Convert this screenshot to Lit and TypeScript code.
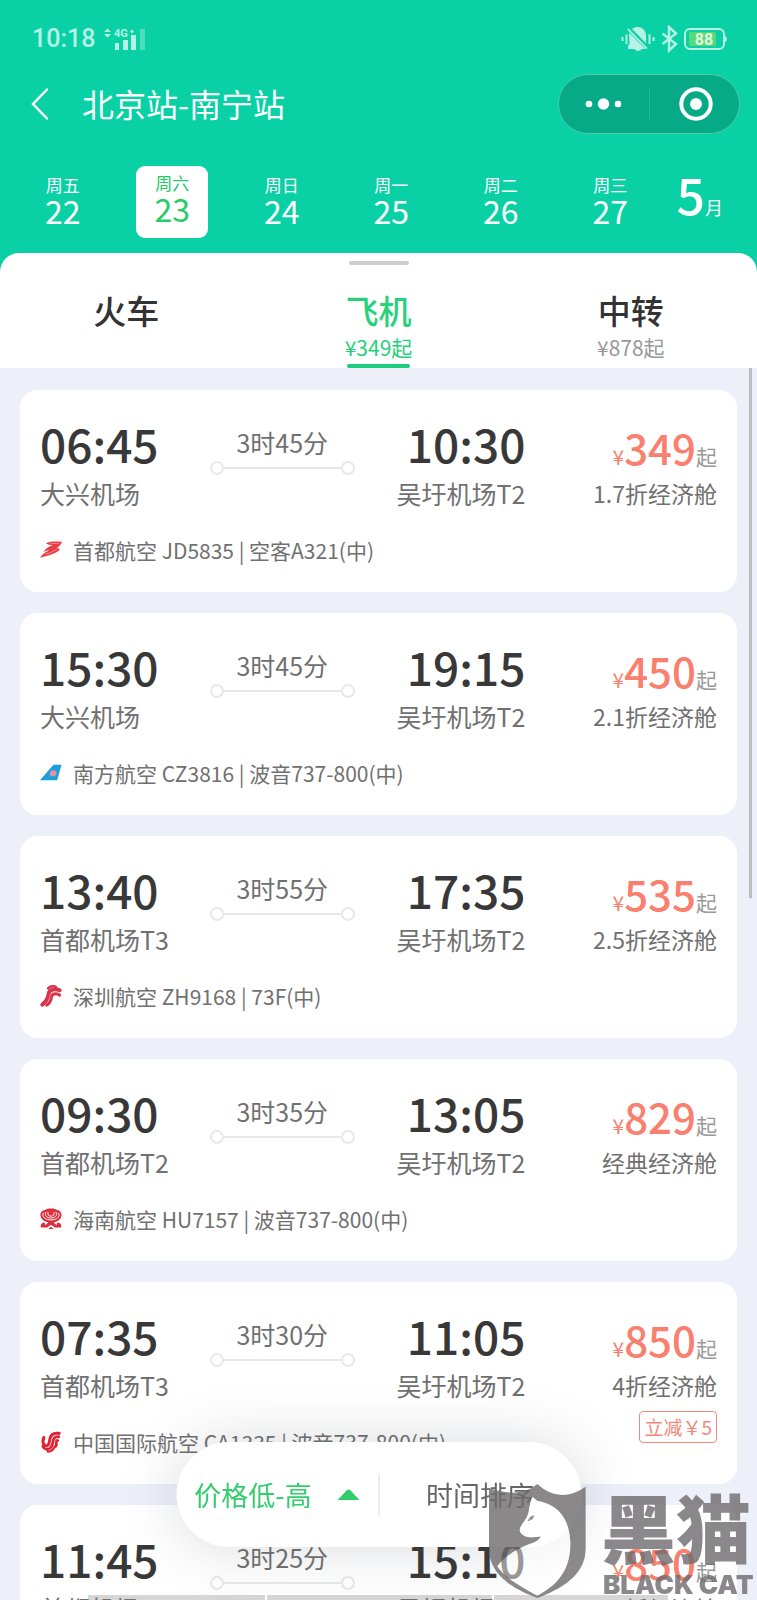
import { LitElement, html, svg, css, nothing } from "lit";
import { customElement, property, state } from "lit/decorators.js";
import { classMap } from "lit/directives/class-map.js";

interface Flight {
  dep: string;
  from: string;
  arr: string;
  to: string;
  duration: string;
  price: number;
  cabin: string;
  airline: string;
  logo: string;
  discount?: string;
}

const FLIGHTS: Flight[] = [
  { dep: "06:45", from: "大兴机场", arr: "10:30", to: "吴圩机场T2", duration: "3时45分", price: 349, cabin: "1.7折经济舱", airline: "首都航空 JD5835 | 空客A321(中)", logo: "jd" },
  { dep: "15:30", from: "大兴机场", arr: "19:15", to: "吴圩机场T2", duration: "3时45分", price: 450, cabin: "2.1折经济舱", airline: "南方航空 CZ3816 | 波音737-800(中)", logo: "cz" },
  { dep: "13:40", from: "首都机场T3", arr: "17:35", to: "吴圩机场T2", duration: "3时55分", price: 535, cabin: "2.5折经济舱", airline: "深圳航空 ZH9168 | 73F(中)", logo: "zh" },
  { dep: "09:30", from: "首都机场T2", arr: "13:05", to: "吴圩机场T2", duration: "3时35分", price: 829, cabin: "经典经济舱", airline: "海南航空 HU7157 | 波音737-800(中)", logo: "hu" },
  { dep: "07:35", from: "首都机场T3", arr: "11:05", to: "吴圩机场T2", duration: "3时30分", price: 850, cabin: "4折经济舱", airline: "中国国际航空 CA1335 | 波音737-800(中)", logo: "ca", discount: "立减￥5" },
  { dep: "11:45", from: "首都机场T3", arr: "15:10", to: "吴圩机场T2", duration: "3时25分", price: 850, cabin: "4折经济舱", airline: "中国国际航空 CA1465 | 波音737-800(中)", logo: "ca" },
];

const LOGOS: Record<string, unknown> = {
  jd: svg`
    <path fill="#ea3d46" d="M6 4C11 1.500 16 2 23 2.500C22 5.500 20 7.500 17.500 9C19.500 9 20.500 10 20.500 11C15 15.500 8 17 0 19C2.500 15.500 6 13 9.500 11.500C7.500 11.300 5.500 12 3.500 13C6 9 10 7 13 6C10.500 5.500 8.500 5.700 6 4Z"/>
    <path stroke="#f7a3a5" stroke-width="0.800" fill="none" d="M6 15.500C11 14 14.500 12 17.500 10.300M11 4.500C14 4 17 4 20 4"/>`,
  cz: svg`
    <path fill="#1e9fdc" d="M0 18.500L14 2.500H22.500L18 18.500Z"/>
    <path fill="#e9919b" d="M10.500 12.500C9.500 9.500 13 7.500 15.500 8.500C18.500 9.500 17.500 14 14.500 14.500C12.500 14.800 11 14 10.500 12.500Z"/>`,
  zh: svg`
    <g fill="none" stroke="#d8334d" stroke-linecap="round">
      <path stroke-width="2.600" d="M8.500 3C11 0 17 .3 17 3"/>
      <path stroke-width="4.200" d="M20.500 5C16 3 9.500 4 9 9C8.500 13 6.500 17 2.500 20"/>
      <path stroke-width="3.200" d="M20.500 10C16 7.500 12.500 9 12 12C11.500 15.500 10 18.500 7 20.500"/>
    </g>
    <path fill="none" stroke="#f3a5b0" stroke-width="0.600" d="M19 7.500C14 5.500 10.800 7.500 10.500 11C10 15 8 18 5 20.500"/>`,
  hu: svg`
    <path fill="#dc2f3e" d="M5 1.500C9 -.5 14 -.5 18 1.500C21 2 23 4.500 22.500 7.500C22 11.500 18 13.500 14.500 14.500C15.500 16 16.500 17 18 17.500C17 16.500 17.500 15 19 15C21.500 15 23 17.500 22 20H15.500L11.500 17L7.500 20H1C0 17.500 1.500 15 4 15C5.500 15 6 16.500 5 17.500C6.500 17 7.500 16 8.500 14.500C5 13.500 1 11.500 .5 7.500C0 4.500 2 2 5 1.500ZM8.500 21.500L11.500 19L14.500 21.500Z"/>
    <path fill="none" stroke="#fff" stroke-width="1" d="M6.500 3.500C4 7.500 7.500 10 11.500 10S19 7.500 16.500 3.500M8.500 4C7.500 6.500 9 8 11.500 8S15.500 6.500 14.500 4M3.500 4.500C1.500 9 6 12 11.500 12S21.500 9 19.500 4.500"/>`,
  ca: svg`
    <g fill="none" stroke="#e02233" stroke-linecap="round">
      <path stroke-width="3.400" d="M20 2C13 1.200 11 4 10.500 8C10 12 8.500 16.500 5.500 15C2.500 13.500 3 9 4 6.500"/>
      <path stroke-width="3" d="M19.500 5.500C15 5 14 7.500 13.500 11C13 15.500 10.500 19.500 6.500 18.500C4.500 18 3.500 17 3 15.500"/>
      <path stroke-width="3" d="M18.500 9.500C16.500 9 16.500 11 17 12.500C17.500 14.500 16.500 16 15 16C13.500 19 11.500 20.500 8.500 20.800"/>
    </g>
    <path fill="none" stroke="#fbd5d8" stroke-width="0.700" d="M19 3.800C14 3.400 12.500 5.500 12 9C11.500 13 9.500 18 5.500 16.600M18 7.300C15.500 7.500 15.500 9.500 15.200 12C14.800 15.500 12 19.500 9 19.800"/>`,
};

@customElement("flight-card")
class FlightCard extends LitElement {
  @property({ attribute: false }) flight!: Flight;

  static styles = css`
    :host { display: block; }
    .card {
      display: grid;
      grid-template-columns: 169fr 145fr 170fr 191fr;
      row-gap: 22px;
      padding: 23px 20px 27px;
      border-radius: 18px;
      background: #fff;
      color: #707070;
      white-space: nowrap;
    }
    .time { font-size: 46px; line-height: 60px; font-weight: 500; color: #383838; }
    .place { font-size: 25px; line-height: 40px; }
    .arrive { text-align: right; }
    .route {
      display: flex;
      flex-direction: column;
      gap: 4px;
      padding-top: 14px;
      text-align: center;
      font-size: 25px;
      line-height: 30px;
    }
    .track { display: flex; align-items: center; }
    .stop { box-sizing: border-box; width: 14px; height: 14px; border: 2px solid #e8e8e8; border-radius: 50%; }
    .line { flex: 1; height: 2px; background: #e8e8e8; }
    .fare {
      grid-column: 4;
      grid-row: 1 / span 2;
      display: flex;
      flex-direction: column;
      align-items: flex-end;
      padding-top: 4px;
    }
    .price { height: 60px; line-height: 60px; color: #f9806f; display: flex; align-items: baseline; }
    .yen { font-size: 21px; }
    .amount { font-size: 42px; font-weight: 500; }
    .from { font-size: 21px; color: #999; }
    .cabin { font-size: 23px; line-height: 32px; }
    .discount {
      box-sizing: border-box;
      margin-top: 10px;
      padding: 0 4px;
      border: 1px solid #f3887b;
      border-radius: 4px;
      color: #f3887b;
      font-size: 19px;
      line-height: 30px;
    }
    .airline {
      grid-column: 1 / span 3;
      display: flex;
      align-items: center;
      gap: 11px;
      font-size: 21px;
      line-height: 30px;
    }
    .logo { width: 22px; height: 22px; flex: none; }
  `;

  render() {
    const f = this.flight;
    return html`
      <article class="card">
        <div>
          <div class="time">${f.dep}</div>
          <div class="place">${f.from}</div>
        </div>
        <div class="route">
          <span>${f.duration}</span>
          <div class="track"><i class="stop"></i><i class="line"></i><i class="stop"></i></div>
        </div>
        <div class="arrive">
          <div class="time">${f.arr}</div>
          <div class="place">${f.to}</div>
        </div>
        <div class="fare">
          <div class="price"><span class="yen">¥</span><span class="amount">${f.price}</span><span class="from">起</span></div>
          <div class="cabin">${f.cabin}</div>
          ${f.discount ? html`<div class="discount">${f.discount}</div>` : nothing}
        </div>
        <div class="airline">
          <svg class="logo" viewBox="0 0 23 22" aria-hidden="true">${LOGOS[f.logo]}</svg>
          <span>${f.airline}</span>
        </div>
      </article>
    `;
  }
}

@customElement("app-root")
class AppRoot extends LitElement {
  @state() private day = 23;
  @state() private tab = "飞机";
  @state() private sort = "price";

  static styles = css`
    :host {
      position: relative;
      display: flex;
      flex-direction: column;
      height: 100vh;
      overflow: hidden;
      background: #09d1a5;
      font-family: "Noto Sans CJK SC", sans-serif;
      font-weight: 400;
    }
    button { margin: 0; padding: 0; border: 0; background: none; color: inherit; font: inherit; cursor: pointer; }
    .status {
      display: flex;
      align-items: center;
      justify-content: space-between;
      height: 28px;
      padding: 25px 30px 0 32px;
      color: #b5f1e4;
    }
    .clock, .indicators { display: flex; align-items: center; }
    .clock { gap: 9px; font: 500 25px/28px Roboto, sans-serif; }
    .indicators { gap: 6px; }
    .signal { width: 42px; height: 22px; }
    .bell { width: 34px; height: 26px; }
    .bluetooth { width: 17px; height: 28px; }
    .battery { width: 43px; height: 24px; font: 700 16px Roboto, sans-serif; }
    .nav { display: flex; align-items: center; height: 60px; padding: 21px 17px 0 20px; color: #fff; }
    .back { width: 40px; height: 40px; }
    .back svg { display: block; width: 40px; height: 40px; }
    .title { flex: 1; margin: 0; padding: 0 0 2px 22px; font-size: 32px; line-height: 40px; font-weight: inherit; }
    .capsule {
      box-sizing: border-box;
      display: flex;
      align-items: center;
      width: 182px;
      height: 60px;
      border: 1px solid #4cc9ab;
      border-radius: 30px;
      background: #07aa87;
    }
    .capsule button { flex: 1; display: flex; justify-content: center; }
    .capsule svg { width: 38px; height: 36px; }
    .split { width: 1px; height: 34px; background: #2bb598; }
    .days { display: flex; padding: 32px 0 15px 8px; color: #fff; }
    .day { flex: 1; display: flex; justify-content: center; }
    .box {
      box-sizing: border-box;
      display: flex;
      flex-direction: column;
      align-items: center;
      justify-content: flex-start;
      width: 72px;
      height: 72px;
      padding-top: 9px;
      border-radius: 9px;
    }
    .box.on { padding-top: 7px; background: #fff; color: #25cb68; }
    .week { font-size: 17px; line-height: 20px; }
    .num { font-size: 32px; line-height: 30px; }
    .month { display: flex; align-items: baseline; justify-content: flex-end; width: 58px; padding-right: 34px; line-height: 54px; }
    .mnum { font-size: 50px; font-weight: 500; }
    .munit { font-size: 18px; }
    .sheet { flex: 1; min-height: 0; display: flex; flex-direction: column; border-radius: 19px 19px 0 0; background: #fff; overflow: hidden; }
    .handle { align-self: center; width: 60px; height: 4px; margin-top: 8px; border-radius: 2px; background: #cdcdcd; }
    .tabs { display: grid; grid-template-columns: repeat(3, 1fr); padding-top: 25px; }
    .tab { display: flex; flex-direction: column; align-items: center; height: 78px; color: #999; }
    .name { font-size: 33px; line-height: 40px; font-weight: 500; color: #333; }
    .low { flex: 1; font-size: 21px; line-height: 34px; }
    .bar { width: 63px; height: 4px; border-radius: 2px; }
    .tab.on, .tab.on .name { color: #26d17a; }
    .tab.on .bar { background: #1fcc7c; }
    .list {
      flex: 1;
      min-height: 0;
      overflow-y: auto;
      scrollbar-width: none;
      display: flex;
      flex-direction: column;
      gap: 21px;
      padding: 22px 20px;
      background: #edf0f8;
    }
    .thumb { position: absolute; right: 5px; top: 368px; width: 3px; height: 530px; background: #b9bcc0; }
    .sorter {
      position: absolute;
      left: 50%;
      bottom: 53px;
      transform: translateX(-50%);
      display: flex;
      align-items: center;
      width: 405px;
      height: 105px;
      border-radius: 53px;
      background: #fff;
      box-shadow: 0 0 60px rgba(70, 75, 90, 0.2);
      color: #666;
      font-size: 27px;
      line-height: 40px;
    }
    .sorter button { flex: 1; display: flex; align-items: center; justify-content: center; gap: 26px; height: 100%; }
    .sorter .on { color: #34cd6e; }
    .arrow { width: 22px; height: 11px; }
    .rule { width: 1px; height: 42px; background: #ddd; }
    .dock { position: absolute; left: 88px; right: 89px; bottom: 0; height: 5px; display: grid; grid-template-columns: 178fr 225fr 175fr; gap: 2px; }
    .dock i { background: rgba(120, 120, 120, 0.3); }
    .mark { position: absolute; right: 0; bottom: 0; display: flex; align-items: flex-end; gap: 14px; color: #6f6b6e; opacity: 0.8; pointer-events: none; }
    .shield { width: 99px; height: 116px; }
    .brand { display: flex; flex-direction: column; width: 156px; padding-bottom: 2px; white-space: nowrap; font-weight: 900; }
    .cn { font-size: 75px; line-height: 92px; }
    .en { font: 900 26px/26px Inter, "Noto Sans CJK SC", sans-serif; padding-left: 2px; }
  `;

  private renderDay(week: string, num: number) {
    return html`
      <div class="day">
        <button class=${classMap({ box: true, on: this.day === num })} @click=${() => (this.day = num)}>
          <span class="week">${week}</span><span class="num">${num}</span>
        </button>
      </div>
    `;
  }

  private renderTab(name: string, low: string) {
    return html`
      <button role="tab" aria-selected=${this.tab === name} class=${classMap({ tab: true, on: this.tab === name })} @click=${() => (this.tab = name)}>
        <span class="name">${name}</span><span class="low">${low}</span><span class="bar"></span>
      </button>
    `;
  }

  render() {
    return html`
      <div class="status">
        <div class="clock">
          <span>10:18</span>
          <svg class="signal" viewBox="0 0 42 22" fill="currentColor">
            <path d="M0 4L3.500 0.500L7 4ZM0 6L3.500 9.500L7 6Z"/>
            <text x="10" y="9" font-size="11" font-weight="700">4G</text>
            <path d="M26 3.500L28 1.500L30 3.500L28 5.500Z"/>
            <rect x="11" y="15" width="4" height="7"/><rect x="19" y="12" width="5" height="10"/>
            <rect x="27" y="7" width="5" height="15"/><rect x="36" y="1" width="5" height="21" opacity="0.400"/>
          </svg>
        </div>
        <div class="indicators">
          <svg class="bell" viewBox="0 0 34 26" fill="none" stroke="currentColor" stroke-width="2">
            <path fill="currentColor" stroke="none" d="M11 3C17 -1.500 25 2.500 25 9.500V17.500ZM8 6.500L24.500 23H20.500C19.500 25.500 14.500 25.500 13.500 23H7V20L8.500 18Z"/>
            <path d="M7 3L26 22.500M1.500 11V15M5.500 8.500V18M28.500 8.500V18M32.500 11V15"/>
            <path stroke="#09d1a5" stroke-width="1.800" d="M9 2.500L27 21"/>
          </svg>
          <svg class="bluetooth" viewBox="0 0 17 28" fill="none" stroke="currentColor" stroke-width="2.400">
            <path d="M1.500 8.500L15 19L8 25.500V2L15 8.500L1.500 19"/>
          </svg>
          <svg class="battery" viewBox="0 0 43 24">
            <rect x="1" y="2" width="39" height="20" rx="5" fill="none" stroke="currentColor" stroke-width="2"/>
            <path fill="currentColor" d="M41 9C43.500 10 43.500 14 41 15Z"/>
            <rect x="5" y="5" width="27" height="14" rx="2" fill="#56d97d"/>
            <text x="20" y="18" text-anchor="middle" fill="#e4f9d8">88</text>
          </svg>
        </div>
      </div>
      <div class="nav">
        <button class="back" aria-label="返回">
          <svg viewBox="0 0 40 40" fill="none" stroke="#fff" stroke-width="2.500" stroke-linecap="round"><path d="M27 5.500L13 20L27 34.500"/></svg>
        </button>
        <h1 class="title">北京站-南宁站</h1>
        <div class="capsule">
          <button aria-label="更多">
            <svg viewBox="0 0 38 36" fill="#fff"><circle cx="4" cy="18" r="3.300"/><circle cx="18.500" cy="18" r="5.700"/><circle cx="33" cy="18" r="3.300"/></svg>
          </button>
          <span class="split"></span>
          <button aria-label="关闭">
            <svg viewBox="0 0 38 36" fill="none" stroke="#fff"><circle cx="21" cy="18" r="14.700" stroke-width="4"/><circle cx="21" cy="18" r="6" fill="#fff" stroke="none"/></svg>
          </button>
        </div>
      </div>
      <div class="days">
        ${this.renderDay("周五", 22)}${this.renderDay("周六", 23)}${this.renderDay("周日", 24)}
        ${this.renderDay("周一", 25)}${this.renderDay("周二", 26)}${this.renderDay("周三", 27)}
        <div class="month"><span class="mnum">5</span><span class="munit">月</span></div>
      </div>
      <main class="sheet">
        <div class="handle"></div>
        <div class="tabs" role="tablist">
          ${this.renderTab("火车", "")}${this.renderTab("飞机", "¥349起")}${this.renderTab("中转", "¥878起")}
        </div>
        <div class="list">${FLIGHTS.map((f) => html`<flight-card .flight=${f}></flight-card>`)}</div>
      </main>
      <div class="thumb"></div>
      <div class="dock"><i></i><i></i><i></i></div>
      <div class="sorter">
        <button class=${classMap({ on: this.sort === "price" })} @click=${() => (this.sort = "price")}>
          价格低-高<svg class="arrow" viewBox="0 0 22 11" fill="currentColor"><path d="M0 11L9 1.500Q11 -.5 13 1.500L22 11Z"/></svg>
        </button>
        <span class="rule"></span>
        <button class=${classMap({ on: this.sort === "time" })} @click=${() => (this.sort = "time")}>时间排序</button>
      </div>
      <div class="mark">
        <svg class="shield" viewBox="0 0 297 348">
          <path fill="currentColor" fill-rule="evenodd" d="M3 12Q95 45 148 0Q215 62 293 8V195Q293 290 148 342Q3 290 3 195ZM133 38L148 51C215 62 245 110 247 175C248 240 225 295 148 335C90 305 45 275 28 247C50 215 95 190 125 180C145 175 156 166 158 157C140 160 118 163 104 152C92 142 94 135 101 123C112 108 118 100 122 84C124 66 128 52 133 38Z"/>
          <path fill="#fff" fill-opacity="0.600" d="M133 38L148 51C215 62 245 110 247 175C248 240 225 295 148 335C90 305 45 275 28 247C50 215 95 190 125 180C145 175 156 166 158 157C140 160 118 163 104 152C92 142 94 135 101 123C112 108 118 100 122 84C124 66 128 52 133 38Z"/>
          <path fill="none" stroke="currentColor" stroke-width="3" d="M120 110Q128 94 138 96Q134 108 120 110"/><circle cx="130" cy="102" r="4" fill="currentColor"/>
        </svg>
        <div class="brand"><span class="cn">黑猫</span><span class="en">BLACK CAT</span></div>
      </div>
    `;
  }
}
